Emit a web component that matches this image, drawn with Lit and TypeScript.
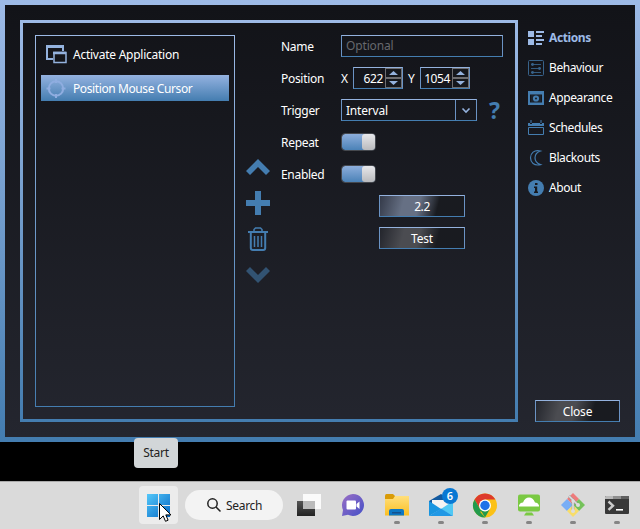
import { LitElement, html, svg, css } from "lit";
import { customElement, property } from "lit/decorators.js";
import { classMap } from "lit/directives/class-map.js";

const NAV = [
  { id: "actions", label: "Actions", icon: svg`<path fill="currentColor" d="M0 1h6v6H0zM0 9h6v6H0zM8 1h8v2H8zM8 5h6v2H8zM8 9h8v2H8zM8 13h6v2H8z"/>` },
  { id: "behaviour", label: "Behaviour", icon: svg`<g opacity=".75"><rect x=".5" y=".5" width="15" height="15" rx="1" fill="none" stroke="currentColor"/><path d="M3 4.500h10M3 8.500h10M3 12.500h10" stroke="currentColor" stroke-width=".9"/><circle cx="4.500" cy="4.500" r="1.400" fill="currentColor"/><circle cx="11.500" cy="8.500" r="1.400" fill="currentColor"/><circle cx="4.500" cy="12.500" r="1.400" fill="currentColor"/></g>` },
  { id: "appearance", label: "Appearance", icon: svg`<path fill="currentColor" fill-rule="evenodd" d="M0 1h16v14H0zM2 4.500v8h12v-8z"/><path fill="currentColor" d="M3 5h10v7H3z" opacity=".12"/><circle cx="8" cy="8.500" r="2.100" fill="none" stroke="currentColor" stroke-width="2"/>` },
  { id: "schedules", label: "Schedules", icon: svg`<path fill="none" stroke="currentColor" d="M.5 7.500h15v7H.5z"/><path fill="currentColor" d="M0 3h2v1h2V3h8v1h2V3h2v3H0zM2.500 0h1v3h-1zM12.500 0h1v3h-1z"/>` },
  { id: "blackouts", label: "Blackouts", icon: svg`<path fill="none" stroke="currentColor" stroke-width="1.200" d="M12.500 1C6-.7 2.500 3.500 2.500 7.800S6 16.300 12.500 14.600C9 13.500 7 11 7 7.800S9 2.200 12.500 1z"/>` },
  { id: "about", label: "About", icon: svg`<circle cx="8" cy="8" r="8" fill="currentColor"/><path fill="#17191f" d="M7 3h2.500v2H7zM6 6.500h3.200v5H10V13H6v-1.500h1V8H6z"/>` },
];

const TASKS = [
  { dot: false, icon: svg`<path fill="url(#tv)" d="M0 7h18v15H0z"/><path fill="#fff" opacity=".85" d="M6 0h18v15H6z"/><path fill="#bbb" d="M6 7h12v8H6z"/>` },
  { dot: false, icon: svg`<path fill="url(#ch)" d="M12 0a11 11 0 1 1-5 20.800L1 22l1-6A11.300 11.300 0 0 1 12 0z"/><rect x="5.500" y="6.500" width="9.500" height="9" rx="1" fill="#fff"/><path fill="#fff" d="m15.500 10 3-2.500v7.500l-3-2.500z"/>` },
  { dot: true, icon: svg`<path fill="#d99b08" d="M0 2q0-2 1.500-2H8l2 2v3H0z"/><path fill="url(#fo)" d="M0 5h8l2-3h14v19.500H0z"/><path fill="#0c77c4" d="M4 21.500V17q0-2 2-2h11q2 0 2 2v4.500z"/><path fill="#14518c" d="M7 18h9v1.500H7z"/>` },
  { dot: true, icon: svg`<path fill="#12599f" d="M0 7 12 0l12 7v4H0z"/><path fill="#f3f3f3" d="M3 6h18v9H3z"/><path fill="#1995e0" d="M0 7l12 8L0 22z"/><path fill="#50c8f4" d="M24 7 12 15l12 7z"/><path fill="#2098e5" d="m0 22 12-7.500L24 22z"/>` },
  { dot: true, icon: svg`<circle cx="12" cy="11.500" r="12" fill="#fbc116"/><path fill="#dd3a2c" d="M1.600 5.500a12 12 0 0 1 20.800 0H12L6.800 14.500z"/><path fill="#229a4c" d="M1.600 5.500 6.800 14.500l5.200 3-5.200 0L12 23.500A12 12 0 0 1 1.600 5.500z"/><path fill="#229a4c" d="m6.800 14.500 5.200 3 5.200-3-5.200 9z"/><circle cx="12" cy="11.500" r="6" fill="#fff"/><circle cx="12" cy="11.500" r="4.700" fill="#1f72e8"/>` },
  { dot: true, icon: svg`<rect x="1" y=".5" width="22" height="17" rx="2" fill="#7ac943"/><path fill="#fff" d="M2 11.500q1-3 4-3 2-5 6-5t6 5q3 0 4 3v1H2z"/><path fill="#7ac943" d="M9 18.500h6l2 3H7z"/>` },
  { dot: true, icon: svg`<path fill="#ee7b7b" d="m12-1 6 6-6 6-6-6z"/><path fill="#79aef5" d="m6 5 6 6-6 6-6-6z"/><path fill="#75c25a" d="m18 5 6 6-6 6-6-6z"/><path fill="#f8dd6a" d="m12 11 6 6-6 6-6-6z"/><path d="m8 2 4 4v11M12 6l5 5" fill="none" stroke="#999" stroke-width="2.600"/><path d="m8 2 4 4v11M12 6l5 5" fill="none" stroke="#ddd" stroke-width="1.700"/><circle cx="12" cy="17" r="2" fill="#ddd"/><circle cx="17" cy="11" r="2" fill="#ddd"/><circle cx="12" cy="7" r="1.700" fill="#ddd"/>` },
  { dot: true, icon: svg`<rect y="2" width="24" height="18" rx="1" fill="#383838"/><path fill="#b9b9b9" d="M0 5V3q0-1 1-1h7v3z"/><path fill="#909090" d="M8 2h8v3H8z"/><path fill="#606060" d="M16 2h7q1 0 1 1v2h-8z"/><path d="m3.500 7.500 4.500 4.200-4.500 4.200" fill="none" stroke="#ccc" stroke-width="2.400"/><path fill="#fff" d="M11 15h7v1.600h-7z"/>` },
];

const base = css`
  * { box-sizing: border-box; }
  svg { display: block; overflow: visible; }
`;

@customElement("toggle-switch")
class ToggleSwitch extends LitElement {
  static styles = [base, css`
    :host { display: block; width: 35px; height: 18px; }
    .track { display: flex; justify-content: flex-end; height: 18px; border: 1px solid #45484e; border-radius: 4px; background: linear-gradient(#8daedc, #4b82b7) padding-box; }
    .thumb { width: 13px; border-radius: 3px; background: linear-gradient(#e8e8eb, #b9babd); }
  `];
  render() { return html`<div class="track"><div class="thumb"></div></div>`; }
}

@customElement("number-box")
class NumberBox extends LitElement {
  @property() value = "";
  static styles = [base, css`
    :host { display: block; }
    .box { display: flex; width: 50px; height: 22px; border: 1px solid; border-color: #94b2de #6b93c4 #447db0; }
    .value { flex: 1; display: flex; justify-content: flex-end; padding-right: 2px; line-height: 22px; letter-spacing: -.4px; white-space: nowrap; }
    .steps { display: grid; grid-template-rows: 10px 10px; width: 17px; }
    .step { display: grid; place-items: center; border: 1px solid #6d6d70; background: #15171c; }
  `];
  render() {
    return html`<div class="box"><span class="value">${this.value}</span><span class="steps">
      <span class="step"><svg width="9" height="4"><path fill="#94b2de" d="M0 4 4.500 0 9 4z"/></svg></span>
      <span class="step"><svg width="9" height="4"><path fill="#94b2de" d="M0 0h9L4.500 4z"/></svg></span>
    </span></div>`;
  }
}

@customElement("app-root")
class AppRoot extends LitElement {
  static styles = [base, css`
    :host { display: block; width: 640px; height: 529px; overflow: hidden; background: #000; color: #fff; font: 12px/16px "Noto Sans", sans-serif; letter-spacing: -.3px; }
    .window { display: flex; height: 442px; border: 5px solid; border-image: linear-gradient(#9dbae6, #447db0) 1; background: linear-gradient(#121318, #24262f); padding: 15px; }
    .panel { display: flex; width: 498px; border: 3px solid; border-image: linear-gradient(#9dbae6, #447db0) 1; padding: 12px; }
    .list { width: 200px; border: 1px solid; border-image: linear-gradient(#9dbae6, #447db0) 1; padding: 5px; }
    .item { display: flex; align-items: center; gap: 6px; height: 26px; padding-left: 5px; margin-bottom: 8px; letter-spacing: -.25px; }
    .item span { padding-top: 2px; }
    .item.selected { background: linear-gradient(#94b2e0, #447db0); letter-spacing: -.4px; }
    .item svg { width: 21px; flex: none; }
    .tools { display: flex; flex-direction: column; align-items: center; width: 24px; margin: 124px 11px 0; color: #447db0; gap: 16px; height: 124px; }
    .tools .trash { margin: -4px 0 0; }
    .off { opacity: .55; }
    .form { display: grid; grid-template-columns: 60px 162px; grid-auto-rows: 22px; row-gap: 10px; align-items: center; align-content: start; }
    .label { padding-top: 2px; }
    .field { display: flex; align-items: center; height: 22px; }
    .frame { border: 1px solid; border-color: #94b2de #6b93c4 #447db0; height: 22px; display: flex; align-items: center; }
    .name { width: 162px; padding-left: 4px; color: #66686d; letter-spacing: -.15px; }
    .axis { width: 12px; padding-top: 2px; }
    .axis.second { margin-left: 5px; }
    .combo { width: 136px; padding-left: 4px; }
    .combo .text { flex: 1; padding-top: 2px; letter-spacing: -.2px; }
    .drop { display: grid; place-items: center; width: 21px; height: 20px; border-left: 1px solid #6b93c4; }
    .help { margin-left: 12px; color: #447db0; font: bold 23px/22px "Noto Sans", sans-serif; }
    .button { display: flex; align-items: center; justify-content: center; width: 86px; height: 22px; padding-top: 2px; border: 1px solid; border-color: #94b2de #6b93c4 #447db0; background: linear-gradient(105deg, #23252c 0%, #4b4c51 28%, #4b4c51 46%, #191b20 68%); letter-spacing: -.2px; }
    .button.primary { background: linear-gradient(105deg, #343a49 0%, #667084 28%, #667084 46%, #191b20 68%); letter-spacing: -.4px; }
    .button.inset { margin-left: 38px; }
    .span { grid-column: 2; }
    .side { display: flex; flex-direction: column; justify-content: space-between; flex: 1; padding-left: 10px; }
    .nav { display: grid; gap: 14px; padding-top: 10px; }
    .link { display: flex; align-items: center; gap: 5px; height: 16px; letter-spacing: -.4px; }
    .link svg { color: #447db0; flex: none; }
    .link.active, .link.active svg { color: #9dbae6; font-weight: bold; }
    .side .button { margin-left: 7px; width: 85px; }
    .gap { height: 39px; }
    .taskbar { position: relative; display: flex; height: 48px; border-top: 1px solid #aaa; background: #dadada; color: #222; padding-left: 139px; }
    .start { display: grid; place-items: center; width: 39px; height: 38px; margin-top: 4px; border-radius: 4px; background: #ececec; }
    .search { display: flex; align-items: center; gap: 5px; width: 98px; height: 30px; margin: 8px 0 0 7px; padding-left: 22px; border-radius: 15px; background: #f3f3f3; }
    .search span { padding-top: 2px; }
    .tasks { display: flex; gap: 20px; margin: 12px 0 0 14px; }
    .task { position: relative; width: 24px; height: 34px; }
    .dot { width: 6px; height: 3px; margin: 3px auto 0; border-radius: 2px; background: #858585; }
    .badge { position: absolute; left: 13px; top: -6px; width: 16px; height: 16px; border-radius: 50%; background: #0878d3; color: #fff; text-align: center; line-height: 16px; font-size: 11px; font-weight: 600; letter-spacing: 0; }
    .tip { position: absolute; left: 134px; top: -44px; width: 44px; height: 30px; border-radius: 4px; background: #d2d6d8; text-align: center; line-height: 30px; }
    .cursor { position: absolute; left: 159px; top: 21px; }
  `];

  render() {
    return html`
      <main class="window">
        <section class="panel">
          <div class="list">
            <div class="item"><svg width="21" height="18" viewBox="0 0 21 18" fill="none" stroke="#94b2de"><path stroke-width="2" d="M7 14H1V1h16v5"/><path stroke-width="3" d="M0 1.500h18"/><path stroke-width="1.500" d="M8 7.500h12v10H8z"/><path stroke-width="2.500" d="M7 8h13"/></svg><span>Activate Application</span></div>
            <div class="item selected"><svg width="21" height="20" viewBox="0 0 21 20" fill="none" stroke="#8fade0" stroke-width="2"><circle cx="10" cy="10.500" r="7.200"/><path d="M10 1v4M10 16v4M.5 10.500h4M15.500 10.500h4"/></svg><span>Position Mouse Cursor</span></div>
          </div>
          <div class="tools">
            <svg width="24" height="16"><path fill="currentColor" d="M12 0 24 12l-4 4-8-8-8 8-4-4z"/></svg>
            <svg width="24" height="24"><path fill="currentColor" d="M9 0h6v9h9v6h-9v9H9v-9H0V9h9z"/></svg>
            <svg class="trash" width="20" height="24" fill="none" stroke="currentColor"><path stroke-width="2" d="M0 5h20M2.800 6v15q0 2 2 2h10.400q2 0 2-2V6"/><path stroke-width="1.500" d="M6 4V2.500L7.500 1h5L14 2.500V4M6.500 9v11M10 9v11M13.500 9v11"/></svg>
            <svg class="off" width="24" height="16"><path fill="currentColor" d="M12 16 24 4l-4-4-8 8-8-8-4 4z"/></svg>
          </div>
          <div class="form">
            <span class="label">Name</span><div class="frame name">Optional</div>
            <span class="label">Position</span><div class="field"><span class="axis">X</span><number-box value="622"></number-box><span class="axis second">Y</span><number-box value="1054"></number-box></div>
            <span class="label">Trigger</span><div class="field"><div class="frame combo"><span class="text">Interval</span><span class="drop"><svg width="8" height="5" fill="none" stroke="#94b2de" stroke-width="1.600"><path d="m.5.5 3.500 3.500L7.500.5"/></svg></span></div><span class="help">?</span></div>
            <span class="label">Repeat</span><toggle-switch></toggle-switch>
            <span class="label">Enabled</span><toggle-switch></toggle-switch>
            <div class="span button primary inset">2.2</div>
            <div class="span button inset">Test</div>
          </div>
        </section>
        <aside class="side">
          <nav class="nav">${NAV.map((n) => html`<div class=${classMap({ link: true, active: n.id === "actions" })}><svg width="16" height="16">${n.icon}</svg><span>${n.label}</span></div>`)}</nav>
          <div class="button">Close</div>
        </aside>
      </main>
      <div class="gap"></div>
      <footer class="taskbar">
        <div class="start"><svg width="23" height="23"><defs>
          <linearGradient id="win" x2="1" y2="1"><stop stop-color="#54c8fa"/><stop offset="1" stop-color="#0668c4"/></linearGradient></defs>
          <path fill="url(#win)" d="M0 0h11v11H0zM12 0h11v11H12zM0 12h11v11H0zM12 12h11v11H12z"/></svg></div>
        <div class="search"><svg width="14" height="14" fill="none" stroke="#222" stroke-width="1.500"><circle cx="5.500" cy="5.500" r="4.700"/><path d="m9 9 4.500 4.500"/></svg><span>Search</span></div>
        <div class="tasks">${TASKS.map((t, i) => html`<div class="task"><svg width="24" height="24">
          <defs><linearGradient id="tv" x2="0" y2="1"><stop stop-color="#555"/><stop offset="1" stop-color="#222"/></linearGradient>
          <linearGradient id="ch" x2="1" y2="1"><stop stop-color="#9a6ec4"/><stop offset="1" stop-color="#4450c8"/></linearGradient>
          <linearGradient id="fo" x2="0" y2="1"><stop stop-color="#ffdf7c"/><stop offset="1" stop-color="#fbbf22"/></linearGradient></defs>
          ${t.icon}</svg>${t.dot ? html`<div class="dot"></div>` : ""}${i === 3 ? html`<span class="badge">6</span>` : ""}</div>`)}</div>
        <div class="tip">Start</div>
        <svg class="cursor" width="13" height="19"><path fill="#fff" stroke="#000" d="M.5.5v16l3.700-3.600 2.300 5.400 2.600-1.100-2.300-5.300H12z"/></svg>
      </footer>`;
  }
}
